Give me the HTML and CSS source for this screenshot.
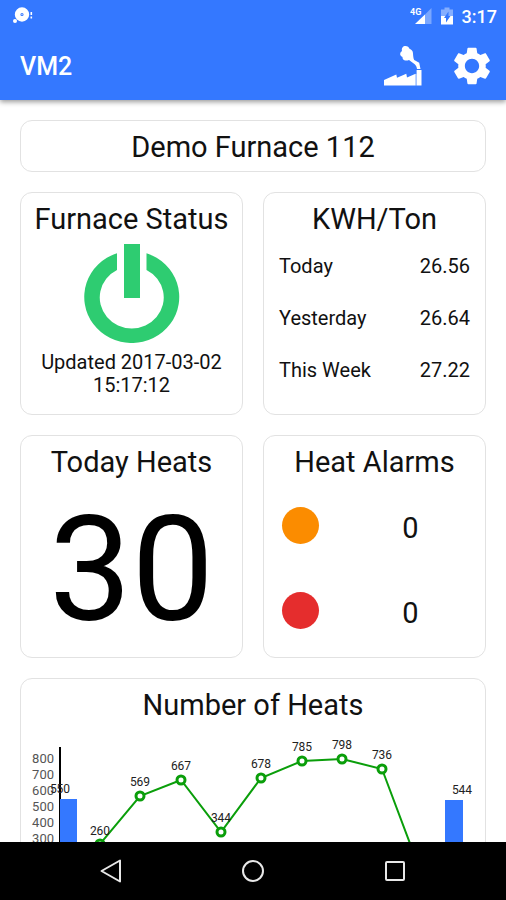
FILE: index.html
```
<!DOCTYPE html>
<html lang="en">
<head>
    <meta charset="UTF-8">
    <meta name="viewport" content="width=device-width, initial-scale=1.0">
    <title>VM2 - Demo Furnace 112</title>
    <link rel="stylesheet" href="styles.css">
</head>
<body>
    <header class="app-header">
        <div class="status-bar">
            <svg class="notification-icon" width="20" height="18" viewBox="0 0 20 18">
                <circle cx="9" cy="7.5" r="4.4" fill="none" stroke="#fff" stroke-width="5.6"/>
                <circle cx="9" cy="7.5" r="0.6" fill="#fff"/>
                <circle cx="2" cy="14" r="2" fill="#fff"/>
                <path d="M17.500 5h1.600v3h-1.600zM17.500 9.500h1.600v2h-1.600z" fill="#fff"/>
            </svg>
            <div class="status-right">
                <svg width="22" height="18" viewBox="0 0 22 18">
                    <path d="M21.500 1v16h-16z" fill="#fff" opacity="0.35"/>
                    <path d="M15 7.500v9.500H5z" fill="#fff"/>
                    <text class="network-type" x="0" y="8">4G</text>
                </svg>
                <svg width="12" height="18" viewBox="0 0 12 18">
                    <path d="M0 2.500h3.500V0.500h5v2H12V9H0z" fill="#fff" opacity="0.4"/>
                    <path d="M0 9h12v8.500H0z" fill="#fff"/>
                    <path d="M7.500 4.500v4.500h2L5 15.500V11H3z" fill="#3478ff"/>
                </svg>
                <span class="clock">3:17</span>
            </div>
        </div>
        <div class="toolbar">
            <h1>VM2</h1>
            <button type="button" class="icon-button" aria-label="Furnaces">
                <svg width="38" height="40" viewBox="0 0 38 40" fill="#fff">
                    <path d="M0 39.500V34l12.300-5.500 0.700 3.300 9.300-4 0.700 3.700 8.600-3.800V39.500z"/>
                    <path d="M32.600 24h4.900v15.500h-4.900z"/>
                    <path d="M31.600 28h1v11.500h-1z" opacity="0.5"/>
                    <path d="M21.500 0c2 0 3.500 1.200 4 2.800 2 0.600 3.500 2.400 3.500 4.700 0.200 2.300 0.200 4.500 1.200 6.500l5 2.700L36.500 23H33c-0.300-2-1-3.500-2.300-4.700L25 14c-2 1-5 0.800-6-0.700-0.500-1-0.500-2.300-0.500-2.300-2-0.800-2.700-2.500-2.200-3.700 0.200-1 1-1.800 1.700-2.300C17.300 2 19 0 21.500 0z"/>
                </svg>
            </button>
            <button type="button" class="icon-button" aria-label="Settings">
                <svg width="44" height="44" viewBox="0 0 24 24" fill="#fff">
                    <path d="M19.430 12.980c.04-.32.07-.64.07-.98s-.03-.66-.07-.98l2.110-1.650c.19-.15.24-.42.12-.64l-2-3.460c-.12-.22-.39-.3-.61-.22l-2.490 1c-.52-.4-1.080-.73-1.690-.98l-.38-2.650C14.460 2.180 14.250 2 14 2h-4c-.25 0-.46.18-.49.42l-.38 2.650c-.61.25-1.170.59-1.690.98l-2.490-1c-.23-.09-.49 0-.61.22l-2 3.460c-.13.22-.07.49.12.64l2.110 1.650c-.04.32-.07.65-.07.98s.03.66.07.98l-2.110 1.650c-.19.15-.24.42-.12.64l2 3.460c.12.22.39.3.61.22l2.490-1c.52.4 1.080.73 1.690.98l.38 2.650c.03.24.24.42.49.42h4c.25 0 .46-.18.49-.42l.38-2.650c.61-.25 1.170-.59 1.690-.98l2.490 1c.23.09.49 0 .61-.22l2-3.460c.12-.22.07-.49-.12-.64l-2.110-1.650zM12 15.900c-2.150 0-3.900-1.750-3.900-3.900s1.750-3.900 3.900-3.900 3.900 1.750 3.900 3.900-1.750 3.900-3.900 3.900z"/>
                </svg>
            </button>
        </div>
    </header>

    <main class="dashboard">
        <section class="card wide name-card">
            <h2>Demo Furnace 112</h2>
        </section>

        <section class="card">
            <h2>Furnace Status</h2>
            <svg class="power-icon" width="96" height="100" viewBox="0 0 96 100" fill="#2ecc71">
                <path d="M40 1h16v54H40z"/>
                <path d="M33 10.300A47.500 46 0 1 0 62.500 10.300V27A32 31 0 1 1 33 27z"/>
            </svg>
            <p class="updated">Updated 2017-03-02 15:17:12</p>
        </section>

        <section class="card">
            <h2>KWH/Ton</h2>
            <table class="kwh-table">
                <tr><th scope="row">Today</th><td>26.56</td></tr>
                <tr><th scope="row">Yesterday</th><td>26.64</td></tr>
                <tr><th scope="row">This Week</th><td>27.22</td></tr>
            </table>
        </section>

        <section class="card">
            <h2>Today Heats</h2>
            <p class="heat-count">30</p>
        </section>

        <section class="card">
            <h2>Heat Alarms</h2>
            <ul class="alarms">
                <li><span class="dot orange"></span><span class="alarm-count">0</span></li>
                <li><span class="dot red"></span><span class="alarm-count">0</span></li>
            </ul>
        </section>

        <section class="card wide">
            <h2>Number of Heats</h2>
            <svg class="chart" viewBox="0 0 464 180">
                <!-- y axis -->
                <g class="axis-labels">
                    <text x="33" y="37">800</text>
                    <text x="33" y="53">700</text>
                    <text x="33" y="69">600</text>
                    <text x="33" y="85">500</text>
                    <text x="33" y="101">400</text>
                    <text x="33" y="117">300</text>
                    <text x="33" y="133">200</text>
                    <text x="33" y="149">100</text>
                    <text x="33" y="165">0</text>
                </g>
                <path class="axis" d="M39 21V161"/>

                <!-- first and last day -->
                <rect class="bar" x="39" y="73" width="17" height="88"/>
                <rect class="bar" x="424" y="74" width="18" height="87"/>

                <polyline class="line" points="79,118 119,70 160,54 200,106 240,52 281,35 321,33 361,43 402,152"/>
                <g class="points">
                    <circle cx="79" cy="118" r="4"/>
                    <circle cx="119" cy="70" r="4"/>
                    <circle cx="160" cy="54" r="4"/>
                    <circle cx="200" cy="106" r="4"/>
                    <circle cx="240" cy="52" r="4"/>
                    <circle cx="281" cy="35" r="4"/>
                    <circle cx="321" cy="33" r="4"/>
                    <circle cx="361" cy="43" r="4"/>
                    <circle cx="402" cy="152" r="4"/>
                </g>
                <g class="values">
                    <text x="39" y="67">550</text>
                    <text x="79" y="109">260</text>
                    <text x="119" y="60">569</text>
                    <text x="160" y="44">667</text>
                    <text x="200" y="96">344</text>
                    <text x="240" y="42">678</text>
                    <text x="281" y="25">785</text>
                    <text x="321" y="23">798</text>
                    <text x="361" y="33">736</text>
                    <text x="441" y="68">544</text>
                </g>
            </svg>
        </section>
    </main>

    <nav class="nav-bar">
        <button type="button" aria-label="Back">
            <svg width="24" height="24" viewBox="0 0 24 24"><path d="M21 1.500v21L2.500 12z"/></svg>
        </button>
        <button type="button" aria-label="Home">
            <svg width="24" height="24" viewBox="0 0 24 24"><circle cx="12" cy="12" r="10"/></svg>
        </button>
        <button type="button" aria-label="Recent apps">
            <svg width="24" height="24" viewBox="0 0 24 24"><rect x="3" y="3" width="18" height="18" rx="1"/></svg>
        </button>
    </nav>
</body>
</html>
```
FILE: styles.css
```
* {
    box-sizing: border-box;
}

body {
    font-family: Roboto, "Liberation Sans", sans-serif;
    background: white;
    color: #111;
    margin: 0;
    height: 100vh;
    display: flex;
    flex-direction: column;
}

h1, h2, p, ul {
    margin: 0;
    padding: 0;
}

button {
    background: none;
    border: none;
    padding: 0;
    cursor: pointer;
}

svg {
    display: block;
}

/* header */
.app-header {
    background-color: #3478ff;
    color: white;
    box-shadow: 0 2px 5px rgba(0, 0, 0, 0.4);
    z-index: 1;
}

.status-bar {
    height: 32px;
    padding: 0 9px 0 13px;
    display: flex;
    justify-content: space-between;
    align-items: center;
}

.status-right {
    display: flex;
    align-items: center;
    gap: 9px;
}

.network-type {
    font-size: 9px;
    font-weight: bold;
    fill: white;
}

.clock {
    font-size: 18px;
    font-weight: 500;
}

.toolbar {
    height: 68px;
    padding: 0 12px 0 20px;
    display: flex;
    align-items: center;
    gap: 28px;
}

h1 {
    flex: 1;
    font-size: 25px;
    font-weight: 500;
}

/* cards */
.dashboard {
    flex: 1;
    min-height: 0;
    overflow-y: auto;
    scrollbar-width: none;
    padding: 20px;
    display: grid;
    grid-template-columns: 1fr 1fr;
    align-content: start;
    gap: 20px;
}

.card {
    min-height: 223px;
    padding-top: 8px;
    border: 1px solid #e2e2e2;
    border-radius: 12px;
}

.wide {
    grid-column: 1 / -1;
}

.name-card {
    min-height: 52px;
}

h2 {
    padding-bottom: 3px;
    font-size: 29px;
    font-weight: normal;
    line-height: 36px;
    text-align: center;
}

.name-card h2 {
    padding-bottom: 0;
}

.power-icon {
    margin: 3px auto 8px;
}

.updated {
    padding: 0 16px;
    font-size: 20px;
    line-height: 23px;
    text-align: center;
}

.kwh-table {
    width: 100%;
    padding: 0 15px;
    border-spacing: 0;
    font-size: 20px;
}

.kwh-table th,
.kwh-table td {
    height: 52px;
    padding: 0;
    font-weight: normal;
    text-align: left;
}

.kwh-table td {
    text-align: right;
}

.heat-count {
    color: black;
    font-size: 147px;
    line-height: 174px;
    text-align: center;
}

.alarms {
    list-style: none;
}

.alarms li {
    height: 85px;
    display: grid;
    grid-template-columns: 72px 1fr;
    align-items: center;
}

.dot {
    width: 37px;
    height: 37px;
    border-radius: 50%;
    justify-self: center;
}

.orange {
    background-color: #fb8c00;
}

.red {
    background-color: #e52d2d;
}

.alarm-count {
    padding-top: 4px;
    font-size: 29px;
    text-align: center;
}

/* chart */
.chart {
    width: 100%;
}

.axis-labels {
    font-size: 13px;
    fill: #555;
    text-anchor: end;
}

.values {
    font-size: 12px;
    fill: #222;
    text-anchor: middle;
}

.axis {
    stroke: black;
    stroke-width: 2;
}

.bar {
    fill: #3478ff;
}

.line {
    fill: none;
    stroke: #0a9e0a;
    stroke-width: 2;
}

.points {
    fill: white;
    stroke: #0a9e0a;
    stroke-width: 3;
}

/* android navigation */
.nav-bar {
    height: 58px;
    background-color: black;
    display: flex;
    justify-content: center;
    align-items: center;
    gap: 118px;
}

.nav-bar svg {
    fill: none;
    stroke: #e8e8e8;
    stroke-width: 2;
    stroke-linejoin: round;
}
```
